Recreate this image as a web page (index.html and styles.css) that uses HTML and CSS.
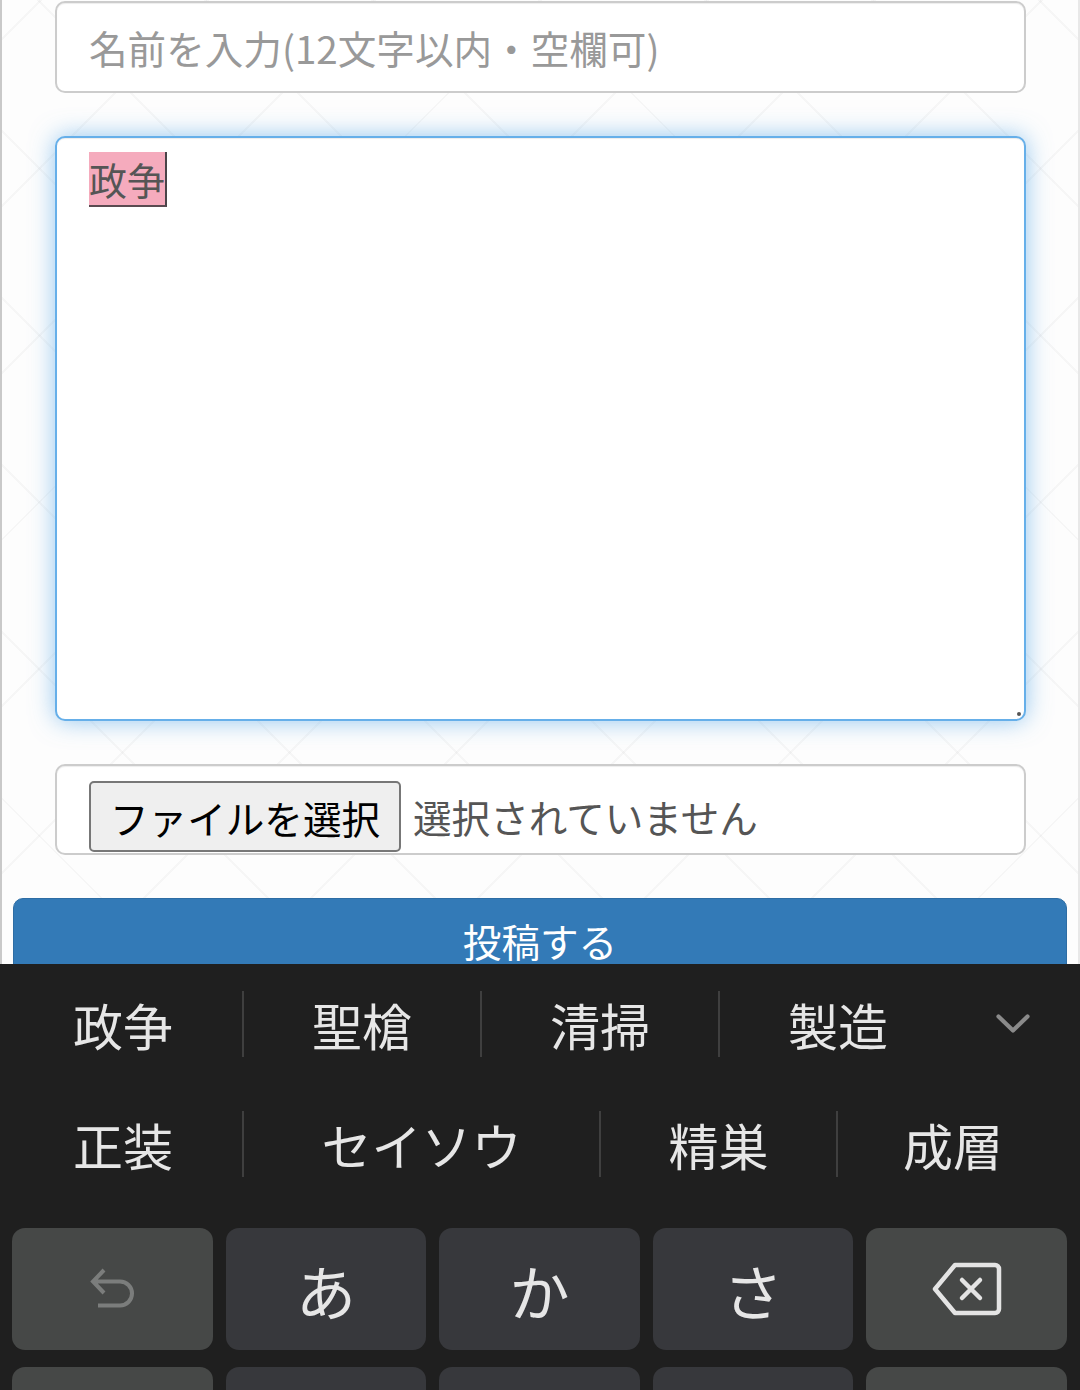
FILE: index.html
```html
<!DOCTYPE html>
<html lang="ja">
<head>
<meta charset="utf-8">
<title>投稿フォーム</title>
<link rel="stylesheet" href="styles.css">
</head>
<body>
<div class="page">
  <div class="form">
    <div class="field name-field"><span class="placeholder">名前を入力(12文字以内・空欄可)</span></div>
    <div class="field textarea-field">
      <span class="composing">政争</span>
      <span class="grip"></span>
    </div>
    <div class="field file-field">
      <span class="file-btn">ファイルを選択</span>
      <span class="file-status">選択されていません</span>
    </div>
    <div class="submit">投稿する</div>
  </div>
</div>
<div class="keyboard">
  <div class="cand-row row1">
    <span class="cand">政争</span>
    <span class="sep"></span>
    <span class="cand">聖槍</span>
    <span class="sep"></span>
    <span class="cand">清掃</span>
    <span class="sep"></span>
    <span class="cand">製造</span>
    <span class="chev">
      <svg width="34" height="20" viewBox="0 0 34 20"><polyline points="2.5,2.5 17,16.5 31.5,2.5" fill="none" stroke="#8a8a8a" stroke-width="4.2" stroke-linecap="round" stroke-linejoin="round"/></svg>
    </span>
  </div>
  <div class="cand-row row2">
    <span class="cand">正装</span>
    <span class="sep"></span>
    <span class="cand">セイソウ</span>
    <span class="sep"></span>
    <span class="cand">精巣</span>
    <span class="sep"></span>
    <span class="cand">成層</span>
  </div>
  <div class="keys">
    <div class="key fn">
      <svg width="46" height="42" viewBox="0 0 46 42"><path d="M15 2 L4 13.5 L15 25 M4 13.5 H31 A12 12 0 0 1 31 37.5 H9" fill="none" stroke="#7b7d7c" stroke-width="4"/></svg>
    </div>
    <div class="key">あ</div>
    <div class="key">か</div>
    <div class="key">さ</div>
    <div class="key fn">
      <svg width="72" height="56" viewBox="0 0 72 56"><path d="M4 28 L24 4 H64 A4 4 0 0 1 68 8 V48 A4 4 0 0 1 64 52 H24 Z" fill="none" stroke="#e4e4e4" stroke-width="4.5" stroke-linejoin="round"/><path d="M31 19 L49 37 M49 19 L31 37" stroke="#e4e4e4" stroke-width="4.5" stroke-linecap="round"/></svg>
    </div>
    <div class="key fn"></div>
    <div class="key"></div>
    <div class="key"></div>
    <div class="key"></div>
    <div class="key fn"></div>
  </div>
</div>
</body>
</html>
```
FILE: styles.css
```css
html, body {
  margin: 0;
  padding: 0;
}
body {
  width: 1080px;
  height: 1390px;
  overflow: hidden;
  font-family: "Noto Sans CJK JP", "Noto Sans", sans-serif;
  background: #1f1f1f;
}
.page {
  height: 964px;
  box-sizing: border-box;
  border-left: 2px solid #c9c9c9;
  border-right: 2px solid #e8e8e8;
  padding: 1px 11px 0 11px;
  overflow: hidden;
  background-color: #fdfdfd;
  background-image:
    repeating-linear-gradient(45deg, rgba(0,0,0,0) 0 116px, rgba(0,0,0,0.028) 116px 118px),
    repeating-linear-gradient(-45deg, rgba(0,0,0,0) 0 116px, rgba(0,0,0,0.028) 116px 118px);
}
.form {
  display: flex;
  flex-direction: column;
  gap: 43px;
}
.field {
  margin: 0 41px 0 42px;
  border: 2px solid #cccccc;
  border-radius: 10px;
  background: #ffffff;
  box-sizing: border-box;
  box-shadow: inset 0 1px 1px rgba(0,0,0,0.075);
}
.name-field {
  height: 92px;
  display: flex;
  align-items: center;
  padding: 0 32px;
}
.placeholder {
  font-size: 38.6px;
  color: #999999;
  white-space: nowrap;
}
.textarea-field {
  height: 585px;
  padding: 14px 32px;
  position: relative;
  border-color: #66afe9;
  box-shadow: inset 0 1px 1px rgba(0,0,0,0.075), 0 0 24px rgba(102,175,233,0.7);
}
.composing {
  display: inline-block;
  vertical-align: top;
  font-size: 38px;
  line-height: 54px;
  height: 55px;
  box-sizing: border-box;
  background: #f5abbd;
  color: #555555;
  border-bottom: 2px solid #5a4a50;
  border-right: 2px solid #4a4448;
}
.grip {
  position: absolute;
  right: 3px;
  bottom: 3px;
  width: 4px;
  height: 4px;
  border-radius: 2px;
  background: #555555;
}
.file-field {
  height: 91px;
  padding: 15px 32px 0;
  display: flex;
  align-items: flex-start;
  gap: 12px;
}
.file-btn {
  height: 71px;
  box-sizing: border-box;
  border: 2px solid #777777;
  border-radius: 5px;
  background: #efefef;
  padding: 0 19px;
  font-size: 38.6px;
  color: #000000;
  display: flex;
  align-items: center;
  white-space: nowrap;
}
.file-status {
  font-size: 38.6px;
  color: #555555;
  line-height: 71px;
  white-space: nowrap;
}
.submit {
  height: 110px;
  box-sizing: border-box;
  background: #337ab7;
  border: 1px solid #2e6da4;
  border-radius: 10px;
  color: #ffffff;
  font-size: 38.6px;
  text-align: center;
  padding-top: 13px;
}
.keyboard {
  height: 426px;
  background: #1f1f1f;
  color: #e6e6e6;
  overflow: hidden;
}
.cand-row {
  height: 120px;
  display: grid;
  align-items: center;
  padding-left: 4px;
  font-size: 50px;
}
.row1 {
  grid-template-columns: 238px 2px 236px 2px 236px 2px 236px 1fr;
  padding-right: 10px;
}
.row2 {
  grid-template-columns: 238px 2px 355px 2px 235px 2px 230px;
}
.cand {
  text-align: center;
  white-space: nowrap;
}
.sep {
  height: 66px;
  width: 2px;
  background: #3f3f3f;
}
.chev {
  display: flex;
  justify-content: center;
  align-items: center;
}
.chev svg {
  display: block;
}
.keys {
  padding: 24px 13px 0 12px;
  display: grid;
  grid-template-columns: repeat(5, 1fr);
  grid-auto-rows: 122px;
  column-gap: 13px;
  row-gap: 17px;
}
.key {
  border-radius: 13px;
  background: #37383c;
  display: flex;
  align-items: center;
  justify-content: center;
  font-size: 60px;
  color: #e6e6e6;
}
.key.fn {
  background: #464847;
}
.key svg {
  display: block;
}
```
